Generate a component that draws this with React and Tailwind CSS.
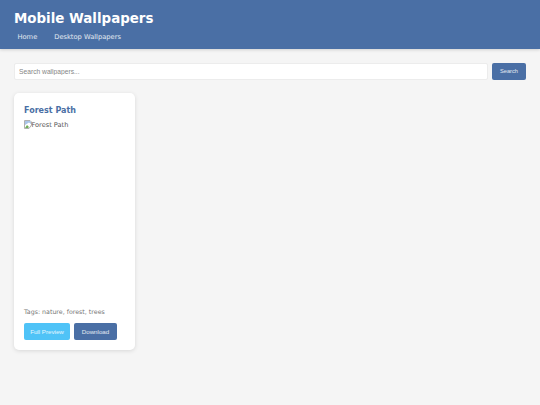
export default function App() {
  return (
    <div className="min-h-[405px] bg-[#f5f5f5] font-['DejaVu_Sans',sans-serif] text-[#333]">
      <header className="h-[49px] bg-[#4a6fa5] px-[14px] pt-[10px] text-white shadow-[0_1px_3px_rgba(0,0,0,0.15)]">
        <h1 className="text-[13.4px] leading-[18px] font-bold">Mobile Wallpapers</h1>
        <nav className="mt-[4px] flex gap-[17px] pl-[3.5px] text-[6.7px] leading-[10px] text-white/85">
          <a>Home</a>
          <a>Desktop Wallpapers</a>
        </nav>
      </header>
      <main className="px-[14px] pt-[14px]">
        <div className="flex gap-[4px]">
          <input
            placeholder="Search wallpapers..."
            className="h-[17px] flex-1 rounded-[2px] border border-[#ececec] bg-white px-[4px] font-['Liberation_Sans',sans-serif] text-[6.7px] outline-none placeholder:text-[#858585]"
          />
          <button className="h-[17px] w-[34px] rounded-[2px] bg-[#4a6fa5] font-['Liberation_Sans',sans-serif] text-[5.7px] text-white/85">
            Search
          </button>
        </div>
        <div className="mt-[13px] flex h-[257px] w-[121px] flex-col rounded-[5px] bg-white px-[10px] pt-[11px] pb-[10px] shadow-[0_1px_4px_rgba(0,0,0,0.12)]">
          <h3 className="mt-[0.5px] text-[8px] leading-[12px] font-bold text-[#4a6fa5]">Forest Path</h3>
          <div className="mt-[3.5px] flex h-[10px] items-center text-[6.6px] leading-[10px] text-[#555]">
            <svg width="8" height="9" viewBox="0 0 8 9" className="mb-[2px] -ml-[0.5px] shrink-0">
              <path d="M0.5 0.5 H6 L7.5 2 V5 L5 8.5 H0.5 Z" fill="#fff" stroke="#b0b0b0" />
              <path d="M1 1 H6 L7 2 V4 L5 2.5 L1 5 Z" fill="#a9c4e8" />
              <path d="M1 8 L3 5 L5 7 L4 8 Z" fill="#6fae5a" />
            </svg>
            <span>Forest Path</span>
          </div>
          <p className="mt-auto text-[6.3px] leading-[8px] text-[#777]">Tags: nature, forest, trees</p>
          <div className="mt-[7px] flex gap-[4px] font-['Liberation_Sans',sans-serif] text-[6.2px] text-white/85">
            <button className="h-[17px] w-[46px] rounded-[2px] bg-[#4fc3f7]">Full Preview</button>
            <button className="h-[17px] w-[43px] rounded-[2px] bg-[#4a6fa5]">Download</button>
          </div>
        </div>
      </main>
    </div>
  );
}
